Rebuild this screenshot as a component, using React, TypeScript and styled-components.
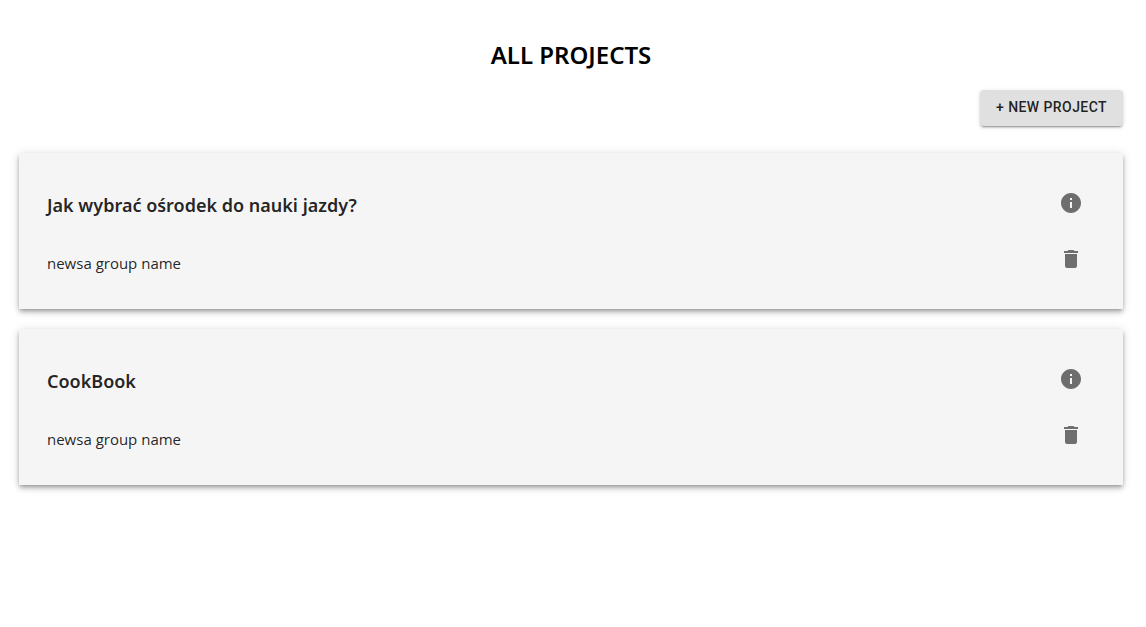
import React from 'react';
import styled, { createGlobalStyle } from 'styled-components';

const GlobalStyle = createGlobalStyle`
  *, *::before, *::after { box-sizing: border-box; }
  body {
    margin: 0;
    background: #fff;
    color: rgba(0, 0, 0, 0.87);
    font-family: 'Segoe UI', 'Open Sans', 'Noto Sans', sans-serif;
  }
`;

const Page = styled.main`
  padding: 39px 23px 20px 19px;
`;

const PageTitle = styled.h1`
  margin: 0;
  color: #000;
  font-family: 'Segoe UI', 'Noto Sans', sans-serif;
  font-size: 24px;
  font-weight: 600;
  line-height: 32px;
  text-align: center;
`;

const Toolbar = styled.div`
  display: flex;
  justify-content: flex-end;
  margin: 19px 0 27px;
`;

const NewProjectButton = styled.button`
  height: 36px;
  padding: 0 16px 2px;
  border: 0;
  border-radius: 4px;
  background: #e0e0e0;
  color: rgba(0, 0, 0, 0.87);
  font-family: Roboto, sans-serif;
  font-size: 14px;
  font-weight: 500;
  line-height: 24px;
  letter-spacing: 0.03em;
  text-transform: uppercase;
  cursor: pointer;
  box-shadow: 0 3px 1px -2px rgba(0, 0, 0, 0.2), 0 2px 2px 0 rgba(0, 0, 0, 0.14),
    0 1px 5px 0 rgba(0, 0, 0, 0.12);
`;

const ProjectList = styled.ul`
  display: flex;
  flex-direction: column;
  gap: 20px;
  margin: 0;
  padding: 0;
  list-style: none;
`;

const Card = styled.li`
  display: flex;
  justify-content: space-between;
  padding: 26px 28px;
  background: #f5f5f5;
  box-shadow: 0 2px 4px -1px rgba(0, 0, 0, 0.3), 0 4px 5px 0 rgba(0, 0, 0, 0.14),
    0 1px 10px 0 rgba(0, 0, 0, 0.12);
`;

const Details = styled.div`
  display: flex;
  flex-direction: column;
  gap: 12px;
`;

const ProjectName = styled.h2`
  margin: 0;
  font-family: 'Segoe UI', 'Noto Sans', sans-serif;
  font-size: 18px;
  font-weight: 600;
  line-height: 52px;
`;

const GroupName = styled.p`
  margin: 0;
  font-size: 15px;
  font-weight: 400;
  line-height: 40px;
`;

const Actions = styled.div`
  display: flex;
  flex-direction: column;
  gap: 8px;
`;

const IconButton = styled.button`
  display: flex;
  align-items: center;
  justify-content: center;
  width: 48px;
  height: 48px;
  padding: 0;
  border: 0;
  border-radius: 50%;
  background: transparent;
  color: #6e6e6e;
  cursor: pointer;
`;

const Icon = styled.svg`
  width: 24px;
  height: 24px;
  fill: currentColor;
`;

const infoPath =
  'M12 2C6.48 2 2 6.48 2 12s4.48 10 10 10 10-4.48 10-10S17.52 2 12 2zm1 15h-2v-6h2v6zm0-8h-2V7h2v2z';
const deletePath =
  'M6 19c0 1.100.9 2 2 2h8c1.100 0 2-.9 2-2V7H6v12zM19 4h-3.500l-1-1h-5l-1 1H5v2h14V4z';

const projects = [
  { name: 'Jak wybrać ośrodek do nauki jazdy?', group: 'newsa group name' },
  { name: 'CookBook', group: 'newsa group name' },
];

export default function App() {
  return (
    <>
      <GlobalStyle />
      <Page>
        <PageTitle>ALL PROJECTS</PageTitle>
        <Toolbar>
          <NewProjectButton type="button">+ New project</NewProjectButton>
        </Toolbar>
        <ProjectList>
          {projects.map((project) => (
            <Card key={project.name}>
              <Details>
                <ProjectName>{project.name}</ProjectName>
                <GroupName>{project.group}</GroupName>
              </Details>
              <Actions>
                <IconButton type="button" aria-label={`Info: ${project.name}`}>
                  <Icon viewBox="0 0 24 24" aria-hidden="true">
                    <path d={infoPath} />
                  </Icon>
                </IconButton>
                <IconButton type="button" aria-label={`Delete: ${project.name}`}>
                  <Icon viewBox="0 0 24 24" aria-hidden="true">
                    <path d={deletePath} />
                  </Icon>
                </IconButton>
              </Actions>
            </Card>
          ))}
        </ProjectList>
      </Page>
    </>
  );
}
